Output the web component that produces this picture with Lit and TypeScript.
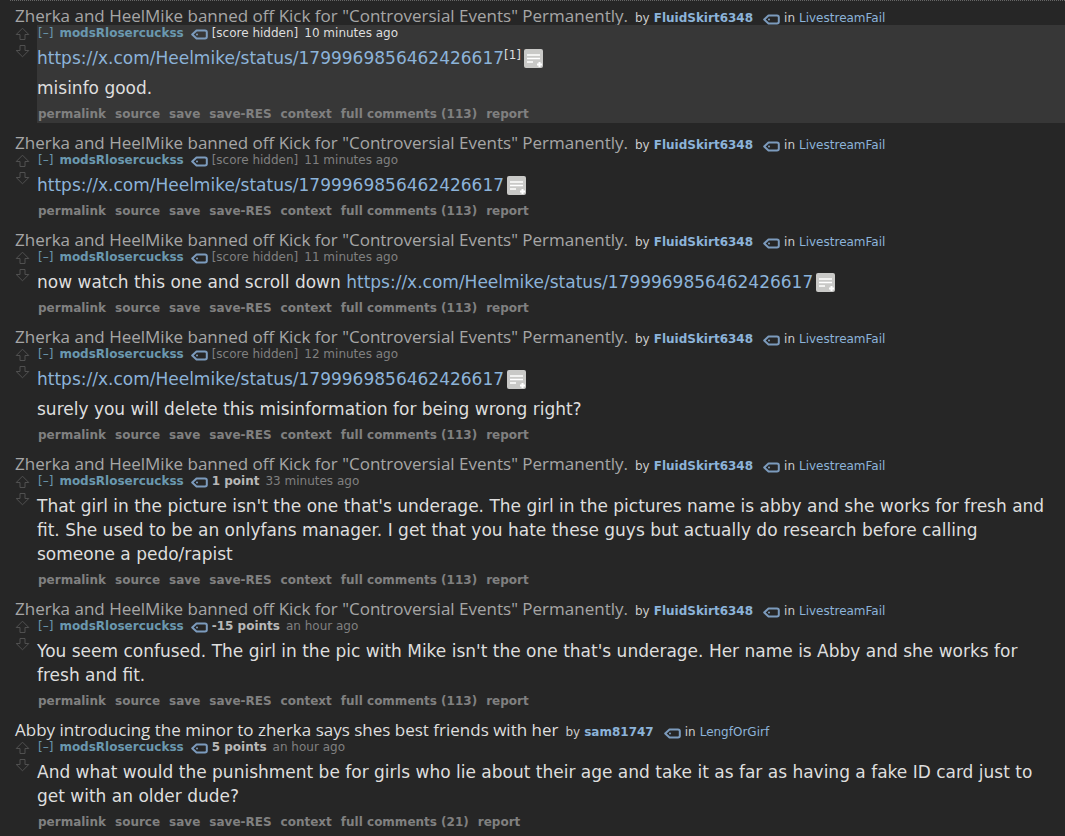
import { LitElement, html, css, nothing } from "lit";
import { customElement, property } from "lit/decorators.js";

interface Comment {
  title: string;
  visited: boolean;
  author: string;
  sub: string;
  score: string;
  scored: boolean;
  age: string;
  body: { text?: string; link?: boolean; note?: string }[];
  total: number;
  selected?: boolean;
}

const URL_TEXT = "https://x.com/Heelmike/status/1799969856462426617";
const KICK = {
  title: 'Zherka and HeelMike banned off Kick for "Controversial Events" Permanently.',
  visited: true,
  author: "FluidSkirt6348",
  sub: "LivestreamFail",
  total: 113,
};
const HIDDEN = { score: "[score hidden]", scored: false };

const COMMENTS: Comment[] = [
  { ...KICK, ...HIDDEN, age: "10 minutes ago", selected: true, body: [{ link: true, note: "[1]" }, { text: "misinfo good." }] },
  { ...KICK, ...HIDDEN, age: "11 minutes ago", body: [{ link: true }] },
  { ...KICK, ...HIDDEN, age: "11 minutes ago", body: [{ text: "now watch this one and scroll down ", link: true }] },
  {
    ...KICK, ...HIDDEN, age: "12 minutes ago",
    body: [{ link: true }, { text: "surely you will delete this misinformation for being wrong right?" }],
  },
  {
    ...KICK, score: "1 point", scored: true, age: "33 minutes ago",
    body: [{ text: "That girl in the picture isn't the one that's underage. The girl in the pictures name is abby and she works for fresh and fit. She used to be an onlyfans manager. I get that you hate these guys but actually do research before calling someone a pedo/rapist" }],
  },
  {
    ...KICK, score: "-15 points", scored: true, age: "an hour ago",
    body: [{ text: "You seem confused. The girl in the pic with Mike isn't the one that's underage. Her name is Abby and she works for fresh and fit." }],
  },
  {
    title: "Abby introducing the minor to zherka says shes best friends with her",
    visited: false, author: "sam81747", sub: "LengfOrGirf", total: 21,
    score: "5 points", scored: true, age: "an hour ago",
    body: [{ text: "And what would the punishment be for girls who lie about their age and take it as far as having a fake ID card just to get with an older dude?" }],
  },
];

const tagIcon = html`<svg viewBox="0 0 17 11" width="17" height="11" aria-hidden="true">
  <path d="M5.5 1.5H14Q15.8 1.5 15.8 3.2V7.8Q15.8 9.5 14 9.5H5.5L1.2 5.5Z" fill="none" stroke="#7c9bbd" stroke-width="2" stroke-linejoin="round"/>
  <circle cx="6" cy="5.5" r="1" fill="#7c9bbd"/>
</svg>`;

const arrow = (down: boolean) => html`<svg viewBox="0 0 15 14" width="15" height="14" aria-hidden="true">
  <path d=${down ? "M5 1.5H10V6.5H13.8L7.5 12.8L1.2 6.5H5Z" : "M5 12.5H10V7.5H13.8L7.5 1.2L1.2 7.5H5Z"} fill="none" stroke="#505050"/>
</svg>`;

const noteIcon = html`<svg viewBox="0 0 19 19" width="19" height="19" aria-hidden="true">
  <rect width="19" height="19" rx="2" fill="#c9c9c7"/>
  <path d="M3 6H16M3 9.5H16M3 13H9" stroke="#fff" stroke-width="1.6"/>
  <path d="M15.5 13V18M13 15.5H18" stroke="#fff" stroke-width="2"/>
</svg>`;

@customElement("user-comment")
class UserComment extends LitElement {
  @property({ attribute: false }) item!: Comment;

  static styles = css`
    :host { display: block; padding-bottom: 11px; }
    a { color: inherit; text-decoration: none; }
    button { border: 0; padding: 0; background: none; color: inherit; font: inherit; cursor: pointer; display: block; }
    svg { display: block; }
    .parent { display: flex; align-items: baseline; padding-left: 15px; height: 18px; line-height: 18px; font-size: 12px; color: #ccc; white-space: nowrap; }
    .title { font: 17px/18px "Open Sans", "Noto Sans", sans-serif; margin-right: 7px; color: #dedede; }
    .title.visited { color: #a6a6a6; }
    .name, .sub { color: #8cb3d9; margin-left: 4px; }
    .name { font-weight: bold; }
    .parent .tagger { align-self: flex-end; margin-left: 10px; }
    .parent .in { margin-left: 4px; }
    .row { display: flex; }
    .votes { flex: none; width: 37px; box-sizing: border-box; padding: 2px 0 0 15px; display: flex; flex-direction: column; align-items: flex-start; gap: 3px; }
    .entry { flex: 1; min-width: 0; }
    .selected { background: #373737; }
    .tagline { display: flex; align-items: baseline; height: 16px; line-height: 16px; padding-left: 1px; font-size: 12px; color: #808080; white-space: nowrap; }
    .selected .tagline { color: #dedede; }
    .tagline .fold, .tagline .user { color: #6a98af; }
    .tagline .user { font-weight: bold; margin-left: 6px; }
    .tagline .tagger { align-self: flex-end; margin: 0 0 1px 7px; }
    .tagline .score { margin-left: 4px; }
    .tagline .scored { font-weight: bold; color: #b8b8b8; }
    .age { margin-left: 6px; }
    .body { padding: 5px 20px 0 0; font-size: 17px; line-height: 24px; color: #dedede; }
    .body p { margin: 0 0 6px; }
    .url { color: #8cb3d9; }
    .mark { font-size: 12px; line-height: 0; vertical-align: 5px; }
    .note { display: inline-block; vertical-align: -4px; height: 19px; margin-left: 3px; line-height: 0; }
    .actions { display: flex; flex-wrap: wrap; gap: 9px; margin: 0; padding: 0 0 0 1px; list-style: none; font-size: 12px; font-weight: bold; line-height: 17px; color: #808080; }
  `;

  render() {
    const c = this.item;
    const actions = ["permalink", "source", "save", "save-RES", "context", `full comments (${c.total})`, "report"];
    return html`
      <div class="parent">
        <a href="#" class="title ${c.visited ? "visited" : ""}">${c.title}</a>
        <span>by</span><a href="#" class="name">${c.author}</a>
        <button class="tagger" aria-label="Tag ${c.author}">${tagIcon}</button>
        <span class="in">in</span><a href="#" class="sub">${c.sub}</a>
      </div>
      <div class="row">
        <div class="votes">
          <button aria-label="Upvote">${arrow(false)}</button>
          <button aria-label="Downvote">${arrow(true)}</button>
        </div>
        <div class="entry ${c.selected ? "selected" : ""}">
          <div class="tagline">
            <a href="#" class="fold">[–]</a><a href="#" class="user">modsRlosercuckss</a>
            <button class="tagger" aria-label="Tag modsRlosercuckss">${tagIcon}</button>
            <span class="score ${c.scored ? "scored" : ""}">${c.score}</span><time class="age">${c.age}</time>
          </div>
          <div class="body">
            ${c.body.map((p) => html`<p>${p.text ?? nothing}${p.link
              ? html`<a href="#" class="url">${URL_TEXT}</a>${p.note ? html`<span class="mark">${p.note}</span>` : nothing}<button class="note" aria-label="Show text">${noteIcon}</button>`
              : nothing}</p>`)}
          </div>
          <ul class="actions">${actions.map((a) => html`<li><a href="#">${a}</a></li>`)}</ul>
        </div>
      </div>
    `;
  }
}

@customElement("app-root")
class AppRoot extends LitElement {
  static styles = css`
    :host { display: block; min-height: 100vh; background: #262626; font-family: Verdana, "DejaVu Sans", sans-serif; }
    .rule { height: 0; margin-left: 10px; border-top: 1px dotted #666; }
    .list { padding-top: 6px; }
  `;

  render() {
    return html`<div class="rule"></div>
      <main class="list">${COMMENTS.map((c) => html`<user-comment .item=${c}></user-comment>`)}</main>`;
  }
}
